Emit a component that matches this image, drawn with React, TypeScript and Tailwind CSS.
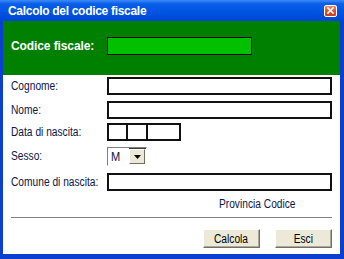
import React from "react";

const font = { fontFamily: '"Liberation Sans", Arial, sans-serif' };

function Label({ children }: { children: React.ReactNode }) {
  return (
    <div className="w-[96px] shrink-0 whitespace-nowrap text-[12px] leading-[13px] text-[#0c1648]">
      <span className="inline-block origin-left scale-x-[0.85]">{children}</span>
    </div>
  );
}

function Box({ className = "" }: { className?: string }) {
  return <div className={"border-2 border-[#111] bg-white " + className} />;
}

function Button({ children }: { children: React.ReactNode }) {
  return (
    <div className="w-[57px] h-[19px] flex items-center justify-center bg-[#ece9d8] border border-t-white border-l-white border-r-[#716f64] border-b-[#716f64] shadow-[inset_-1px_-1px_0_#aca899] text-[12px] text-black">
      <span className="inline-block scale-x-[0.85]">{children}</span>
    </div>
  );
}

export default function App() {
  return (
    <div className="w-[344px] h-[259px] flex flex-col bg-[#0a3fd2] overflow-hidden" style={font}>
      <div className="h-[21px] shrink-0 flex items-center pl-[8px] pr-[7px] bg-[linear-gradient(180deg,#3d8af7_0%,#0a5fe8_18%,#0054e3_55%,#0047d6_100%)]">
        <span className="flex-1 text-white font-bold text-[12px] tracking-[-0.3px] leading-[14px]">
          Calcolo del codice fiscale
        </span>
        <div className="w-[13px] h-[12px] rounded-[2px] border border-white bg-[linear-gradient(180deg,#f08a6a_0%,#e0502c_50%,#c8401c_100%)] flex items-center justify-center">
          <svg width="7" height="7" viewBox="0 0 7 7">
            <path d="M1 1 L6 6 M6 1 L1 6" stroke="white" strokeWidth="1.6" strokeLinecap="square" />
          </svg>
        </div>
      </div>
      <div className="flex-1 ml-[3px] mr-[4px] mb-[5px] bg-white flex flex-col">
        <div className="h-[54px] shrink-0 bg-[#008000] pl-[8px] pt-[16px]">
          <div className="flex items-center h-[18px]">
            <div className="w-[96px] text-white font-bold text-[12px] tracking-[-0.1px]">Codice fiscale:</div>
            <div className="w-[145px] h-[18px] border border-black bg-[#00c000]" />
          </div>
        </div>
        <div className="px-[8px] flex flex-col">
          <div className="mt-[2px] h-[18px] flex items-center">
            <Label>Cognome:</Label>
            <Box className="flex-1 h-[18px]" />
          </div>
          <div className="mt-[6px] h-[18px] flex items-center">
            <Label>Nome:</Label>
            <Box className="flex-1 h-[18px]" />
          </div>
          <div className="mt-[4px] h-[18px] flex items-center">
            <Label>Data di nascita:</Label>
            <div className="flex h-[18px]">
              <Box className="w-[21px] h-[18px]" />
              <Box className="w-[22px] h-[18px] -ml-[2px]" />
              <Box className="w-[35px] h-[18px] -ml-[2px]" />
            </div>
          </div>
          <div className="mt-[6px] h-[19px] flex items-center">
            <Label>Sesso:</Label>
            <div className="w-[40px] h-[19px] flex border border-t-[#808080] border-l-[#808080] border-r-white border-b-white shadow-[inset_1px_1px_0_#404040]">
              <div className="flex-1 pl-[3px] pt-[1px] text-[13px] leading-[16px] text-[#0c1648] bg-white">
                <span className="inline-block origin-left scale-x-[0.85]">M</span>
              </div>
              <div className="w-[16px] mt-[1px] mb-[1px] mr-[1px] bg-[#ece9d8] border border-t-white border-l-white border-r-[#716f64] border-b-[#716f64] flex items-center justify-center">
                <svg width="7" height="4" viewBox="0 0 7 4">
                  <path d="M0 0 H7 L3.5 4 Z" fill="black" />
                </svg>
              </div>
            </div>
          </div>
          <div className="mt-[7px] h-[18px] flex items-center">
            <Label>Comune di nascita:</Label>
            <Box className="flex-1 h-[18px]" />
          </div>
          <div className="mt-[7px] h-[12px] pl-[208px] whitespace-nowrap text-[12px] leading-[12px] text-[#0c1648]">
            <span className="inline-block origin-left scale-x-[0.85]">Provincia Codice</span>
          </div>
          <div className="mt-[7px] h-px bg-[#808080]" />
          <div className="mt-[11px] flex justify-end gap-[15px]">
            <Button>Calcola</Button>
            <Button>Esci</Button>
          </div>
        </div>
      </div>
    </div>
  );
}
